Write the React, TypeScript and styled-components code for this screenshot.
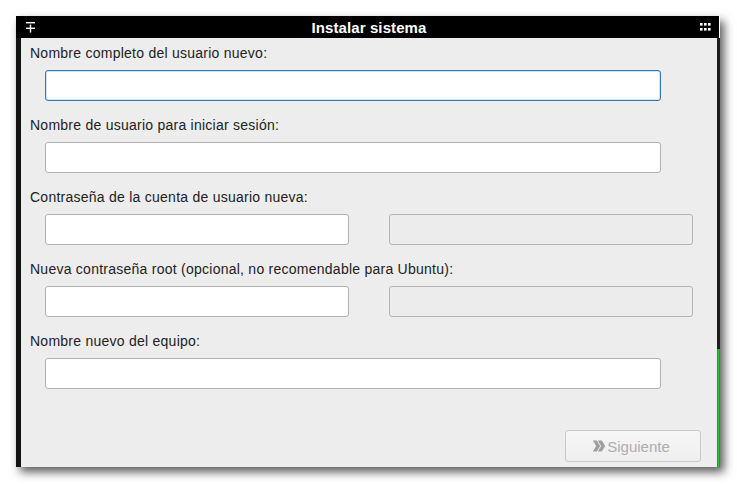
import React from "react";
import styled, { createGlobalStyle } from "styled-components";

const Global = createGlobalStyle`
  html, body { margin: 0; padding: 0; background: #ffffff; }
  body { font-family: "Liberation Sans", Arial, sans-serif; }
`;

const Page = styled.div`
  padding: 16px 0 0 16px;
  width: 737px;
  height: 484px;
  box-sizing: border-box;
`;

const Window = styled.div`
  width: 704px;
  display: flex;
  flex-direction: column;
  box-shadow: 4px 5px 9px rgba(0, 0, 0, 0.65);
`;

const TitleBar = styled.div`
  height: 22px;
  width: 703px;
  background: #000;
  display: flex;
  align-items: center;
  justify-content: space-between;
  padding: 0 8px 0 10px;
  box-sizing: border-box;
`;

const Title = styled.div`
  color: #fff;
  font-weight: bold;
  font-size: 15px;
  letter-spacing: 0.1px;
  flex: 1;
  text-align: center;
  padding-top: 1px;
  padding-left: 3px;
`;

const Body = styled.div`
  position: relative;
  height: 429px;
  background: #ededed;
  border-left: 5px solid #141414;
  border-right: 3px solid #1e1e1e;
  box-sizing: border-box;
  display: flex;
  flex-direction: column;
  padding: 7px 16px 5px 9px;
`;

const GreenEdge = styled.div`
  position: absolute;
  right: -3px;
  bottom: 0;
  width: 3px;
  height: 118px;
  background: linear-gradient(to right, #178a17, #2cc62c, #178a17);
`;

const Field = styled.div`
  display: flex;
  flex-direction: column;
  gap: 8px;
  margin-bottom: 16px;
`;

const Label = styled.div`
  font-size: 14px;
  line-height: 17px;
  color: #222;
  letter-spacing: 0.25px;
`;

const InputRow = styled.div`
  display: flex;
  gap: 40px;
  padding-left: 15px;
`;

const Input = styled.div<{ $w: number; $focused?: boolean; $disabled?: boolean }>`
  width: ${(p) => p.$w}px;
  height: 31px;
  box-sizing: border-box;
  border-radius: 3px;
  border: 1px solid ${(p) => (p.$focused ? "#2f77b8" : p.$disabled ? "#b4b4b4" : "#b0b0b0")};
  background: ${(p) => (p.$disabled ? "#ececec" : "#ffffff")};
  box-shadow: ${(p) => (p.$focused ? "inset 0 0 0 0.5px rgba(47,119,184,0.4)" : "none")};
`;

const Footer = styled.div`
  margin-top: auto;
  display: flex;
  justify-content: flex-end;
`;

const Button = styled.div`
  width: 136px;
  height: 32px;
  box-sizing: border-box;
  border: 1px solid #c9c9c9;
  border-radius: 3px;
  background: linear-gradient(#f6f6f6, #eeeeee);
  display: flex;
  align-items: center;
  justify-content: center;
  gap: 1px;
  color: #adadad;
  font-size: 15px;
  padding-right: 4px;
`;

const PinIcon = () => (
  <svg width="9" height="11" viewBox="0 0 9 11">
    <rect x="0" y="0" width="9" height="1.4" fill="#fff" />
    <rect x="3.8" y="2.6" width="1.4" height="8" fill="#fff" />
    <rect x="0" y="5.6" width="9" height="1.4" fill="#fff" />
  </svg>
);

const GridIcon = () => (
  <svg width="11" height="8" viewBox="0 0 11 8">
    {[0, 4, 8].map((x) =>
      [0, 5].map((y) => <rect key={`${x}-${y}`} x={x} y={y} width="2.6" height="2.6" fill="#fff" />)
    )}
  </svg>
);

const NextIcon = () => (
  <svg width="14" height="14" viewBox="0 0 14 14">
    <path d="M0.8 1.5 L4.8 1.5 L8.2 7 L4.8 12.5 L0.8 12.5 L4.2 7 Z" fill="#9f9f9f" />
    <path d="M5.8 1.5 L9.8 1.5 L13.2 7 L9.8 12.5 L5.8 12.5 L9.2 7 Z" fill="#9f9f9f" />
  </svg>
);

export default function App() {
  return (
    <>
      <Global />
      <Page>
        <Window>
          <TitleBar>
            <PinIcon />
            <Title>Instalar sistema</Title>
            <GridIcon />
          </TitleBar>
          <Body>
            <Field>
              <Label>Nombre completo del usuario nuevo:</Label>
              <InputRow>
                <Input $w={616} $focused />
              </InputRow>
            </Field>
            <Field>
              <Label>Nombre de usuario para iniciar sesión:</Label>
              <InputRow>
                <Input $w={616} />
              </InputRow>
            </Field>
            <Field>
              <Label>Contraseña de la cuenta de usuario nueva:</Label>
              <InputRow>
                <Input $w={304} />
                <Input $w={304} $disabled />
              </InputRow>
            </Field>
            <Field>
              <Label>Nueva contraseña root (opcional, no recomendable para Ubuntu):</Label>
              <InputRow>
                <Input $w={304} />
                <Input $w={304} $disabled />
              </InputRow>
            </Field>
            <Field>
              <Label>Nombre nuevo del equipo:</Label>
              <InputRow>
                <Input $w={616} />
              </InputRow>
            </Field>
            <Footer>
              <Button>
                <NextIcon />
                Siguiente
              </Button>
            </Footer>
            <GreenEdge />
          </Body>
        </Window>
      </Page>
    </>
  );
}
